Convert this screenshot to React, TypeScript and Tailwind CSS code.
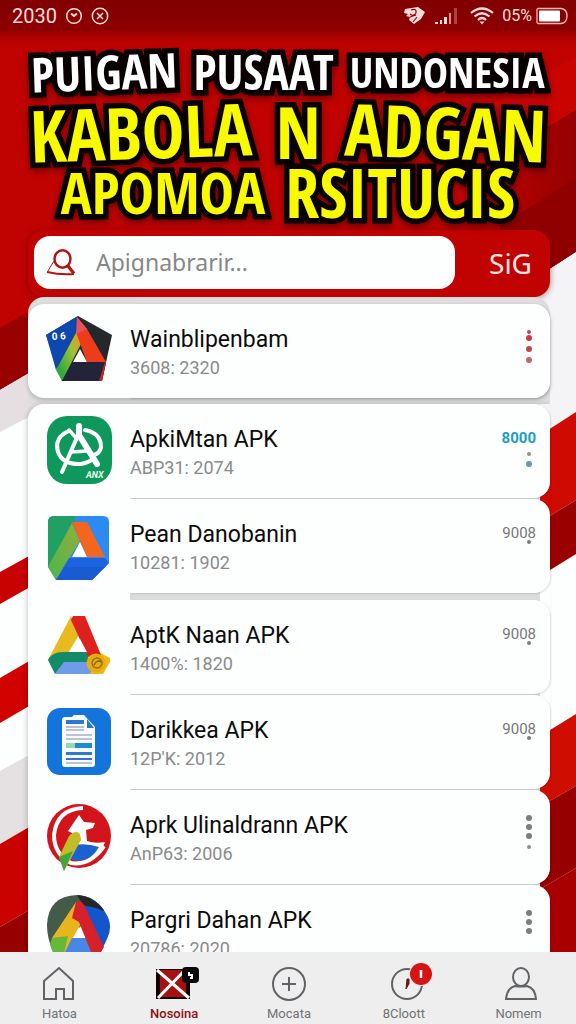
import type { ReactNode } from 'react';

interface AppEntry {
  title: string;
  details: string;
  icon: ReactNode;
  price?: string;
  priceClass?: string;
  dots: Array<{ y: number; color: string; r: number }>;
  spaced?: boolean;
}

const Backdrop = () => (
  <svg className="absolute inset-0 h-full w-full" viewBox="0 0 576 1024" preserveAspectRatio="none" aria-hidden="true">
    <defs>
      <linearGradient id="band" x1="0" x2="1" y1="0" y2="0">
        <stop offset="0" stopColor="#c00300" />
        <stop offset="1" stopColor="#960000" />
      </linearGradient>
      <linearGradient id="top" x1="0" x2="0" y1="0" y2="1">
        <stop offset="0" stopColor="#800000" />
        <stop offset="0.6" stopColor="#8e0000" />
        <stop offset="1" stopColor="#c00300" stopOpacity="0" />
      </linearGradient>
    </defs>
    <rect width="576" height="1024" fill="#fdfefe" />
    <path d="M0 0H576V252L300 430L0 328Z" fill="#c00300" />
    <path d="M430 140L576 57V110L430 197Z" fill="#c90400" />
    <path d="M470 173L576 110V252L500 300V227Z" fill="url(#band)" />
    <path d="M500 226L576 178V252L500 300Z" fill="#910000" />
    <rect width="576" height="50" fill="url(#top)" />
    <path d="M0 328L60 293V355L0 390Z" fill="#990000" />
    <path d="M0 390L60 355V401L0 432Z" fill="#e6dfe1" />
    <path d="M0 604L60 570V539L0 572Z" fill="#c80200" />
    <path d="M0 678L60 643V688L0 723Z" fill="#d00300" />
    <path d="M0 771L60 738V809L0 844Z" fill="#e5e1e2" />
    <path d="M0 844L60 809V892L0 927Z" fill="#c90200" />
    <path d="M0 927L60 892V1024H0Z" fill="#970000" />
    <path d="M500 302L576 252V412L500 461Z" fill="#f4f4f6" />
    <path d="M500 461L576 412V500L500 546Z" fill="#cf0a00" />
    <path d="M500 546L576 500V554L500 601Z" fill="#990000" />
    <path d="M500 761L576 714V786L500 829Z" fill="#cf0d00" />
    <path d="M500 829L576 786V868L500 913Z" fill="#970000" />
    <path d="M500 913L576 868V1024H500Z" fill="#a80000" />
    <rect x="60" y="302" width="480" height="722" fill="#dddcdd" />
  </svg>
);

const StatusBar = () => (
  <header className="flex h-8 items-center justify-between pl-3 pr-2 text-[#ffdcdc]">
    <div className="flex items-center gap-2">
      <span className="text-xl leading-5">2030</span>
      <svg className="h-[18px] w-[18px]" viewBox="0 0 18 18" fill="none" stroke="currentColor" strokeWidth="1.5">
        <circle cx="9" cy="9" r="7.3" />
        <path d="M6 6.5L9 9L12 6.5" strokeWidth="2" />
      </svg>
      <svg className="h-[18px] w-[18px]" viewBox="0 0 18 18" fill="none" stroke="currentColor" strokeWidth="1.5">
        <circle cx="9" cy="9" r="7.7" />
        <path d="M6 6L12 12M12 6L6 12" />
      </svg>
    </div>
    <div className="flex items-center">
      <svg className="mr-2 h-5 w-[22px]" viewBox="0 0 22 20" fill="currentColor">
        <path d="M1 3L14 1L21 6L17 13L10 18L5 14L6 11L2 10L4 8L0 7Z" />
        <path d="M7 4Q13 2 12 7Q9 11 6 8M13 11L9 16M6 11L12 9" fill="none" stroke="#8b0000" strokeWidth="1.2" />
      </svg>
      <svg className="mr-3 h-[18px] w-6" viewBox="0 0 24 18" fill="currentColor">
        <path d="M1 15H4V17H1ZM6 13H8V17H6ZM10 10H13V17H10Z" />
        <path d="M15 6H17V17H15Z" opacity=".65" />
        <path d="M20 1H23V17H20Z" opacity=".3" />
      </svg>
      <svg className="mr-2 h-[18px] w-6" viewBox="0 0 24 18" fill="none" stroke="currentColor" strokeWidth="2.2">
        <path d="M1 6Q12 -3 23 6M4.500 9.500Q12 3 19.500 9.500M8 13Q12 9 16 13" />
        <path d="M9.500 14.500H14.500L12 17.500Z" fill="currentColor" stroke="none" />
      </svg>
      <span className="mr-1 text-base leading-5">05%</span>
      <svg className="h-[18px] w-8" viewBox="0 0 32 18">
        <path d="M2 1.500H25Q31 2 31 9T25 16.500H2Q1 16.500 1 15V3Q1 1.500 2 1.500Z" fill="none" stroke="#ffb9b9" strokeWidth="1.3" />
        <rect x="3" y="3.500" width="21" height="11" rx="1" fill="#fff" />
      </svg>
    </div>
  </header>
);

const Headline = () => (
  <h1 className="flex flex-col items-center whitespace-nowrap pb-1 pt-3 font-['Open_Sans_Condensed','Open_Sans',sans-serif] font-black text-[#f8fb00] drop-shadow-[0_3px_3px_rgba(60,0,0,0.6)] [-webkit-text-stroke:11px_#080000] [paint-order:stroke_fill] [stroke-linejoin:round]">
    <span className="flex items-center gap-4 text-5xl leading-[56px] text-white">
      <span className="-rotate-2">PUIGAN</span>
      <span>PUSAAT</span>
      <span className="text-[42px]">UNDONESIA</span>
    </span>
    <span className="flex items-center gap-6 text-7xl leading-[62px]">
      <span className="-rotate-2">KABOLA</span>
      <span>N</span>
      <span className="rotate-2">ADGAN</span>
    </span>
    <span className="flex items-center gap-5 text-[68px] leading-[60px]">
      <span className="text-[58px]">APOMOA</span>
      <span>RSITUCIS</span>
    </span>
  </h1>
);

const SearchPanel = () => (
  <form className="flex items-center rounded-2xl bg-[#c00200] p-1.5 pb-2 pr-[18px] shadow-[0_1px_6px_rgba(90,0,0,0.5)]">
    <label className="flex h-[53px] min-w-0 flex-1 items-center rounded-2xl bg-[#fdfefe] pl-3">
      <svg className="h-7 w-8 shrink-0" viewBox="0 0 32 28" fill="none" stroke="#b51310" strokeWidth="2.4">
        <ellipse cx="16.500" cy="10" rx="8" ry="8.700" />
        <path d="M22 17L28 24.500" strokeWidth="3.200" />
        <path d="M8 12Q3 20 1.500 23" strokeWidth="1" />
        <path d="M1 23Q14 26 28 25" strokeWidth="1.800" />
      </svg>
      <input
        type="text"
        aria-label="Apignabrarir"
        placeholder="Apignabrarir..."
        className="ml-[18px] min-w-0 flex-1 bg-transparent font-['Noto_Sans',sans-serif] text-[23px] text-gray-600 outline-none placeholder:text-[#878787]"
      />
    </label>
    <button type="submit" className="ml-[34px] font-['Noto_Sans',sans-serif] text-[28px] leading-8 text-[#ffe4e4]">
      SiG
    </button>
  </form>
);

const PentagonIcon = () => (
  <svg className="h-[72px] w-[68px]" viewBox="0 0 68 72">
    <defs>
      <linearGradient id="strip" x1="0" x2="1" y1="1" y2="0">
        <stop offset="0.2" stopColor="#35a83c" />
        <stop offset="0.6" stopColor="#9cc23a" />
        <stop offset="1" stopColor="#f7921e" />
      </linearGradient>
    </defs>
    <path d="M33 1L67 20L57 66H17L1 20Z" fill="#23282b" />
    <path d="M33 1L1 20L11 55L32 16Z" fill="#0d48ae" />
    <path d="M32 16L11 55L17 66L37 27Z" fill="url(#strip)" />
    <path d="M32 2L42 14L61 47L42 47L32 20Z" fill="#f03a1c" />
    <path d="M32 2L42 14L31 19Z" fill="#e8525a" />
    <path d="M35 34L42 47H28Z" fill="#fffdf2" />
    <path d="M28 47H61L57 66H17Z" fill="#22243a" />
    <path d="M61 47L57 66L54 66L60 47Z" fill="#d22323" />
    <text x="7" y="25" fontSize="10" fontWeight="700" fill="#fff" transform="rotate(-4 7 25)">
      0 6
    </text>
  </svg>
);

const CompassIcon = () => (
  <svg className="h-[72px] w-[68px]" viewBox="0 0 68 72">
    <rect x="2" y="1" width="65" height="68" rx="20" fill="#0f985b" />
    <g fill="none" stroke="#fff" strokeLinecap="round">
      <path d="M24 16Q9 22 13 37Q18 50 36 49Q43 48 48 44M40 15Q56 18 56 32Q55 39 48 40" strokeWidth="4" />
      <path d="M34 11V20" strokeWidth="6" />
      <path d="M33 20L17 57" strokeWidth="4" />
      <path d="M34 20L52 49" strokeWidth="6" />
      <path d="M26 37L43 36M24 15L32 24" strokeWidth="3.500" />
    </g>
    <text x="41" y="63" fontSize="9" fontWeight="700" fontStyle="italic" fill="#e8fff0">
      ANX
    </text>
  </svg>
);

const DriveSquareIcon = () => (
  <svg className="h-[72px] w-[68px]" viewBox="0 0 68 72">
    <defs>
      <linearGradient id="lime" x1="1" x2="0" y1="0" y2="1">
        <stop offset="0" stopColor="#93ae3d" />
        <stop offset="1" stopColor="#4bb749" />
      </linearGradient>
    </defs>
    <path d="M9 6H58Q64 6 64 12V53L47 70H11L3 57V12Q3 6 9 6Z" fill="#2b8bf2" />
    <path d="M9 6H30V13L3 57V12Q3 6 9 6Z" fill="#20a063" />
    <path d="M27 13L35 31L11 70L3 57Z" fill="url(#lime)" />
    <path d="M24 48H60L64 53L47 70H11Z" fill="#1c63df" />
    <path d="M20 57H60L47 70H11Z" fill="#195bd0" />
    <path d="M27 12H42L60 47H42Z" fill="#f4651e" />
    <path d="M35 32L42 47H27Z" fill="#fff" />
  </svg>
);

const DriveCoinIcon = () => (
  <svg className="h-[72px] w-[68px]" viewBox="0 0 68 72">
    <path d="M26 5L34 24L19 49L8 50L3 49Z" fill="#e7ba1f" />
    <path d="M3 49Q7 41 18 41H43V51H20L10 63Z" fill="#138a68" />
    <path d="M19 51H45L54 63H10Z" fill="#6f9be8" />
    <path d="M55 42L65 47V51L58 63H45Z" fill="#f0b90f" />
    <path d="M28 5H40L56 44L43 46L26 9Z" fill="#dd211d" />
    <path d="M35 28L42 41H28Z" fill="#fff" />
    <circle cx="51" cy="52" r="9.500" fill="#e8ac13" />
    <circle cx="52" cy="52" r="5" fill="none" stroke="#a06f0c" strokeWidth="1.500" />
    <path d="M49 54Q52 48 56 51" fill="none" stroke="#7c5a12" strokeWidth="1.300" />
  </svg>
);

const DocumentIcon = () => (
  <svg className="h-[72px] w-[68px]" viewBox="0 0 68 72">
    <rect x="2" y="2" width="64" height="67" rx="13" fill="#1375dc" />
    <path d="M20 11H27L29 9H39L50 21V58Q50 61 47 61H20Q17 61 17 58V14Q17 11 20 11Z" fill="#f8fbff" />
    <path d="M42 13L49 22H42Z" fill="#2775d5" />
    <path d="M21 14H39V18H21ZM21 46H47V49H21ZM21 52H47V54H21Z" fill="#2f77d0" />
    <path d="M30 37H47V42H30Z" fill="#208bd5" />
    <path d="M21 37H30V42H21Z" fill="#8fdcab" />
    <path d="M21 21H39M21 24H39M21 29H47M21 33H47M21 57H47" stroke="#a9b0ba" strokeWidth="1.500" />
  </svg>
);

const FoxIcon = () => (
  <svg className="h-[72px] w-[68px]" viewBox="0 0 68 72">
    <circle cx="34" cy="35" r="32" fill="#d3151b" />
    <path d="M38 7Q12 8 9 34Q9 53 26 62Q45 65 59 45" fill="none" stroke="#fff" strokeWidth="4" />
    <path d="M34 14L39 21L50 22L48 27L41 29L42 40Q50 43 60 41Q57 51 47 58L29 48V39Q31 33 23 30Z" fill="#fff" />
    <path d="M29 44Q42 42 54 46Q47 59 34 60Q27 59 22 57Z" fill="#1c61d2" />
    <path d="M24 35Q31 28 35 33L36 39L19 70L14 56Z" fill="#c3bb28" />
    <path d="M14 56L28 50L19 70Z" fill="#42a640" />
  </svg>
);

const DriveRoundIcon = () => (
  <svg className="h-[72px] w-[68px] overflow-visible" viewBox="0 0 68 72">
    <path d="M2 29Q3 0 32 -1Q49 0 59 14L36 30L9 58Q2 43 2 29Z" fill="#435b49" />
    <path d="M32 -1Q50 0 60 16L38 9Z" fill="#20282b" />
    <path d="M40 10Q52 11 60 16Q69 29 62 43L53 62H45Z" fill="#1454cc" />
    <path d="M31 6L37 26L18 60L7 50V42Z" fill="#e9b51d" />
    <path d="M7 42L23 40L17 66H11L5 48Z" fill="#64b83a" />
    <path d="M27 42H42L51 66H15Z" fill="#4788e7" />
    <path d="M31 6Q37 3 40 11L59 51L50 66L34 26L27 22Z" fill="#d6202a" />
    <path d="M34 31L40 42H28Z" fill="#fff" />
  </svg>
);

const GRAY = '#7d7d7d';
const menuDots = [
  { y: 28, color: GRAY, r: 3 },
  { y: 37, color: GRAY, r: 3 },
  { y: 46, color: GRAY, r: 3 },
];

const featured: AppEntry = {
  title: 'Wainblipenbam',
  details: '3608: 2320',
  icon: <PentagonIcon />,
  dots: [
    { y: 28, color: '#b7474d', r: 2 },
    { y: 34, color: '#cf3941', r: 3 },
    { y: 45, color: '#b7474d', r: 3 },
    { y: 56, color: '#c2666c', r: 3 },
  ],
};

const apps: AppEntry[] = [
  {
    title: 'ApkiMtan APK',
    details: 'ABP31: 2074',
    icon: <CompassIcon />,
    price: '8000',
    priceClass: 'font-bold text-[#1b9dc4]',
    dots: [
      { y: 50, color: '#8b8f94', r: 2 },
      { y: 60, color: '#6a94c0', r: 3 },
    ],
  },
  {
    title: 'Pean Danobanin',
    details: '10281: 1902',
    icon: <DriveSquareIcon />,
    price: '9008',
    dots: [{ y: 43, color: GRAY, r: 2 }],
  },
  {
    title: 'AptK Naan APK',
    details: '1400%: 1820',
    icon: <DriveCoinIcon />,
    price: '9008',
    dots: [{ y: 43, color: GRAY, r: 2 }],
    spaced: true,
  },
  {
    title: 'Darikkea APK',
    details: "12P'K: 2012",
    icon: <DocumentIcon />,
    price: '9008',
    dots: [{ y: 43, color: GRAY, r: 2 }],
  },
  {
    title: 'Aprk Ulinaldrann APK',
    details: 'AnP63: 2006',
    icon: <FoxIcon />,
    dots: [...menuDots, { y: 57, color: '#8d8d8d', r: 2 }],
  },
  {
    title: 'Pargri Dahan APK',
    details: '20786: 2020',
    icon: <DriveRoundIcon />,
    dots: menuDots,
  },
];

const AppRow = ({ app }: { app: AppEntry }) => (
  <>
    <div className="flex w-[102px] shrink-0 items-start pl-[17px] pt-[11px]">{app.icon}</div>
    <div className="flex min-h-[94px] min-w-0 flex-1 rounded-r-2xl bg-[#fdfefe] pr-3.5 shadow-[1px_1px_2px_rgba(0,0,0,0.12)]">
      <div className="min-w-0 flex-1 pt-5">
        <h2 className="truncate text-[23px] leading-8 text-[#0b0b0b]">{app.title}</h2>
        <p className="text-lg leading-6 text-[#8a8a8a]">{app.details}</p>
      </div>
      <button type="button" aria-label={`Menu ${app.title}`} className="relative flex items-start justify-end">
        {app.price && <span className={`pt-6 text-[15px] leading-5 ${app.priceClass ?? 'text-[#777777]'}`}>{app.price}</span>}
        <svg className="absolute right-0 top-0 h-[70px] w-3.5" viewBox="0 0 14 70">
          {app.dots.map((dot) => (
            <circle key={dot.y} cx="7" cy={dot.y} r={dot.r} fill={dot.color} />
          ))}
        </svg>
      </button>
    </div>
  </>
);

const navItems: Array<{ label: string; icon: ReactNode; active?: boolean }> = [
  {
    label: 'Hatoa',
    icon: <path d="M5 15L20 2L34 15V33H25V23H17V33H5Z" />,
  },
  {
    label: 'Nosoina',
    active: true,
    icon: (
      <>
        <rect x="2" y="3" width="34" height="30" fill="#100202" stroke="none" />
        <rect x="6" y="4" width="26" height="27" fill="#a61010" stroke="none" />
        <path d="M3 4L35 32M31 4L4 32" stroke="#fff" strokeWidth="3" />
        <rect x="28" y="1" width="17" height="16" rx="4" fill="#090909" stroke="none" />
        <path d="M35 6V9H38V12H36" stroke="#fff" strokeWidth="2" />
      </>
    ),
  },
  {
    label: 'Mocata',
    icon: (
      <>
        <circle cx="20" cy="18" r="16" />
        <path d="M20 11V25M13 18H27" />
      </>
    ),
  },
  {
    label: '8Cloott',
    icon: (
      <>
        <circle cx="23" cy="18" r="15" />
        <path d="M23 13L25 13V18L22 23Z" fill="#6b1717" stroke="#6b1717" strokeWidth="1" />
        <circle cx="37" cy="8" r="12" fill="#ededee" stroke="none" />
        <circle cx="37" cy="8" r="11" fill="#d61414" stroke="none" />
        <path d="M37 4V12" stroke="#fff" strokeWidth="2.500" />
      </>
    ),
  },
  {
    label: 'Nomem',
    icon: (
      <>
        <ellipse cx="22" cy="11" rx="8" ry="9" />
        <path d="M16 20Q8 22 7 33H37Q36 22 28 20Q22 21 16 20Z" />
      </>
    ),
  },
];

const BottomNav = () => (
  <nav className="relative grid shrink-0 grid-cols-5 bg-[#eeeeef] pb-0.5 pl-0.5 pt-3.5">
    {navItems.map((item) => (
      <a
        key={item.label}
        href="#"
        className={`flex flex-col items-center gap-1 text-[13px] leading-4 ${item.active ? 'font-medium text-[#8d0f12]' : 'text-[#707276]'}`}
      >
        <svg className="h-9 w-10 overflow-visible" viewBox="0 0 40 36" fill="none" stroke="#5f6266" strokeWidth="2">
          {item.icon}
        </svg>
        {item.label}
      </a>
    ))}
  </nav>
);

export default function App() {
  return (
    <div className="relative flex h-screen flex-col overflow-hidden font-[Roboto,sans-serif]">
      <Backdrop />
      <main className="relative min-h-0 flex-1 overflow-x-hidden overflow-y-auto [scrollbar-width:none]">
        <StatusBar />
        <Headline />
        <div className="pl-7 pr-6.5 pt-1">
          <SearchPanel />
          <div className="rounded-t-2xl bg-[#dedcdc] pb-1.5 pt-[7px]">
            <article className="flex rounded-2xl bg-[#fdfefe] shadow-[0_2px_4px_rgba(0,0,0,0.2)]">
              <AppRow app={featured} />
            </article>
          </div>
          <ul className="relative rounded-tl-2xl bg-linear-to-r from-[#fdfefe] from-[102px] to-transparent to-[102px] shadow-[-2px_0_4px_rgba(0,0,0,0.15)]">
            {apps.map((app) => (
              <li key={app.title} className={`flex pb-px ${app.spaced ? 'pt-1.5' : ''}`}>
                <AppRow app={app} />
              </li>
            ))}
          </ul>
        </div>
      </main>
      <BottomNav />
    </div>
  );
}
